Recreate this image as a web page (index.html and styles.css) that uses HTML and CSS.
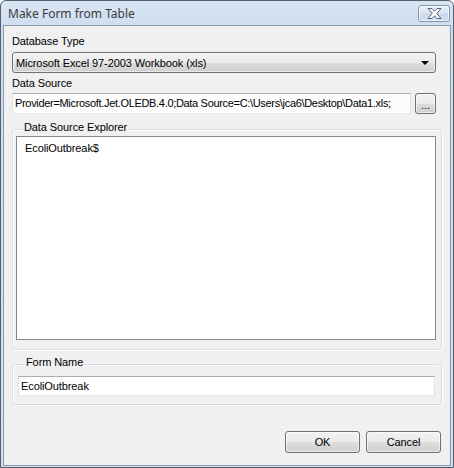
FILE: index.html
```html
<!DOCTYPE html>
<html>
<head>
<meta charset="utf-8">
<link rel="stylesheet" href="styles.css">
</head>
<body>
<div class="window">
  <div class="titlebar">
    <span class="title">Make Form from Table</span>
    <div class="close">
      <svg width="15" height="11" viewBox="0 0 15 11">
        <path d="M1 0.5 H5 L7.5 3.2 L10 0.5 H14 L9.8 5.5 L14 10.5 H10 L7.5 7.8 L5 10.5 H1 L5.2 5.5 Z" fill="#ffffff" stroke="#56657a" stroke-width="1" stroke-linejoin="round"/>
      </svg>
    </div>
  </div>
  <div class="client">
    <div class="label">Database Type</div>
    <div class="combo">
      <span class="combo-text">Microsoft Excel 97-2003 Workbook (xls)</span>
      <span class="arrow"></span>
    </div>
    <div class="label label-ds">Data Source</div>
    <div class="ds-row">
      <div class="textbox ds-box">Provider=Microsoft.Jet.OLEDB.4.0;Data Source=C:\Users\jca6\Desktop\Data1.xls;</div>
      <div class="btn btn-small">...</div>
    </div>
    <div class="group group-explorer">
      <div class="group-title">Data Source Explorer</div>
      <div class="listbox">
        <div class="list-item">EcoliOutbreak$</div>
      </div>
    </div>
    <div class="group group-form">
      <div class="group-title">Form Name</div>
      <div class="textbox form-box">EcoliOutbreak</div>
    </div>
    <div class="buttons">
      <div class="btn btn-main">OK</div>
      <div class="btn btn-main">Cancel</div>
    </div>
  </div>
</div>
</body>
</html>
```
FILE: styles.css
```css
* { box-sizing: border-box; }
html, body { margin: 0; padding: 0; background: #ffffff; }
body { font-family: "Liberation Sans", Arial, sans-serif; font-size: 11px; color: #000; letter-spacing: -0.1px; }

.window {
  width: 454px;
  height: 468px;
  border: 1px solid #55606e;
  border-radius: 6px 6px 0 0;
  background: linear-gradient(#d9e5f3, #cddcee 30px, #d2deec);
  padding: 0 2px 1px 2px;
  display: flex;
  flex-direction: column;
}

.titlebar {
  height: 24px;
  flex: none;
  display: flex;
  align-items: center;
  justify-content: space-between;
  padding: 0 1px 0 5px;
}
.title {
  font-family: "Noto Sans", "Open Sans", sans-serif;
  font-size: 12px;
  letter-spacing: 0;
  color: #3b3b3b;
  margin-top: 1px;
}
.close {
  width: 32px;
  height: 17px;
  margin-top: 1px;
  border: 1px solid #8597b0;
  border-radius: 3px;
  background: linear-gradient(#e9f0f8, #d6e2f0 50%, #c9d7e9 51%, #d3e0ef);
  box-shadow: inset 0 0 0 1px rgba(255,255,255,0.6);
  display: flex;
  align-items: center;
  justify-content: center;
}
.close svg { display: block; }

.client {
  flex: 1;
  background: #f0f0f0;
  border: 1px solid #8c9bae;
  padding: 9px 8px 0 8px;
  display: flex;
  flex-direction: column;
}

.label {
  line-height: 13px;
  height: 13px;
}
.label-ds { margin-top: 4px; }

.combo {
  margin-top: 4px;
  width: 424px;
  height: 21px;
  border: 1px solid #707070;
  border-radius: 3px;
  background: linear-gradient(#f2f2f2, #ebebeb 50%, #dddddd 51%, #cfcfcf);
  box-shadow: inset 0 0 0 1px rgba(255,255,255,0.55);
  display: flex;
  align-items: center;
  justify-content: space-between;
  padding: 0 4px 0 3px;
}
.combo-text { line-height: 13px; margin-top: 1px; }
.arrow {
  width: 0; height: 0;
  border-left: 4px solid transparent;
  border-right: 4px solid transparent;
  border-top: 4px solid #000;
  margin-right: 2px;
}

.ds-row {
  margin-top: 3px;
  width: 424px;
  height: 21px;
  display: flex;
  gap: 4px;
}
.textbox {
  background: #ffffff;
  border: 1px solid #e2e3ea;
  border-top-color: #abadb3;
  border-bottom-color: #e3e9ef;
  line-height: 13px;
  white-space: nowrap;
  overflow: hidden;
}
.ds-box {
  width: 399px;
  height: 21px;
  padding: 3px 0 0 2px;
  background: #fcfcfc;
  letter-spacing: -0.32px;
}

.btn {
  border: 1px solid #707070;
  border-radius: 3px;
  background: linear-gradient(#f2f2f2, #ebebeb 50%, #dddddd 51%, #cfcfcf);
  box-shadow: inset 0 0 0 1px rgba(255,255,255,0.6);
  display: flex;
  align-items: center;
  justify-content: center;
  line-height: 13px;
}
.btn-small {
  width: 21px;
  height: 21px;
  padding-top: 3px;
}

.group {
  border: 1px solid #d5dfe5;
  border-radius: 3px;
  display: flex;
  flex-direction: column;
  box-shadow: inset 1px 1px 0 #ffffff, 1px 1px 0 #ffffff;
}
.group-title {
  align-self: flex-start;
  background: #f0f0f0;
  line-height: 13px;
  height: 13px;
  padding: 0 1px;
  margin: -9px 0 0 7px;
}
.group-explorer {
  margin-top: 15px;
  padding: 0 5px 9px 3px;
}
.listbox {
  margin-top: 2px;
  height: 204px;
  background: #ffffff;
  border: 1px solid #828790;
  padding: 5px 0 0 8px;
}
.list-item { line-height: 13px; }

.group-form {
  margin-top: 14px;
  padding: 0 6px 8px 5px;
}
.form-box {
  margin-top: 7px;
  height: 20px;
  padding: 3px 0 0 2px;
}

.buttons {
  margin-top: 26px;
  display: flex;
  justify-content: flex-end;
  gap: 6px;
  padding-right: 1px;
}
.btn-main {
  width: 75px;
  height: 22px;
  padding-top: 1px;
}
```
